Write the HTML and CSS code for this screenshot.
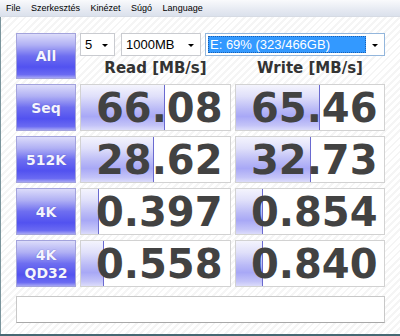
FILE: index.html
```html
<!DOCTYPE html>
<html>
<head>
<meta charset="utf-8">
<link rel="stylesheet" href="styles.css">
</head>
<body>
<div class="window">
  <div class="menubar">
    <span>File</span><span>Szerkesztés</span><span>Kinézet</span><span>Súgó</span><span>Language</span>
  </div>
  <div class="main">
    <div class="grid">
      <div class="btn">All</div>
      <div class="top">
        <div class="selects">
          <div class="select s-count"><span>5</span><i class="arrow"></i></div>
          <div class="select s-size"><span>1000MB</span><i class="arrow"></i></div>
          <div class="select s-drive"><span class="hl">E: 69% (323/466GB)</span><i class="arrow"></i></div>
        </div>
        <div class="heads">
          <div class="head">Read [MB/s]</div>
          <div class="head">Write [MB/s]</div>
        </div>
      </div>

      <div class="btn">Seq</div>
      <div class="cell"><div class="bar" style="width:83px"></div><span class="val">66.08</span></div>
      <div class="cell"><div class="bar" style="width:83px"></div><span class="val">65.46</span></div>

      <div class="btn">512K</div>
      <div class="cell"><div class="bar" style="width:72px"></div><span class="val">28.62</span></div>
      <div class="cell"><div class="bar" style="width:74px"></div><span class="val">32.73</span></div>

      <div class="btn">4K</div>
      <div class="cell"><div class="bar" style="width:17px"></div><span class="val">0.397</span></div>
      <div class="cell"><div class="bar" style="width:26px"></div><span class="val">0.854</span></div>

      <div class="btn two">4K<br>QD32</div>
      <div class="cell"><div class="bar" style="width:22px"></div><span class="val">0.558</span></div>
      <div class="cell"><div class="bar" style="width:26px"></div><span class="val">0.840</span></div>
    </div>
    <div class="status"></div>
  </div>
</div>
</body>
</html>
```
FILE: styles.css
```css
html, body {
  margin: 0;
  padding: 0;
}
body {
  width: 400px;
  height: 336px;
  overflow: hidden;
  background: #ffffff;
}
.window {
  width: 400px;
  height: 336px;
  box-sizing: border-box;
  display: flex;
  flex-direction: column;
  border-bottom: 2px solid #466873;
  background: repeating-linear-gradient(-45deg, #ffffff 0 3px, #f5f5f5 3px 5px);
}
.menubar {
  height: 16px;
  flex: none;
  display: flex;
  align-items: center;
  gap: 10.5px;
  padding-left: 6px;
  font-family: "Liberation Sans", Arial, sans-serif;
  font-size: 9px;
  color: #000;
  background: linear-gradient(#f9fafc, #e6eaf2 60%, #dbe1ec);
  border-bottom: 1px solid #d6dbe4;
}
.main {
  flex: 1;
  border-left: 1px solid #7a949c;
  padding: 16px 0 0 15px;
}
.grid {
  display: grid;
  grid-template-columns: 60px 151px 150px;
  grid-template-rows: 46px 47px 47px 47px 47px;
  column-gap: 4px;
  row-gap: 5px;
}
.btn {
  box-sizing: border-box;
  border: 1px solid #a3a3dc;
  background: linear-gradient(#dcdcfa 0%, #b0b0f4 25%, #6e6ef0 50%, #5252f0 75%, #6a6af2 92%, #a6a6f4 100%);
  color: #f4f4ff;
  font-family: "DejaVu Sans", Verdana, sans-serif;
  font-weight: bold;
  font-size: 14px;
  display: flex;
  align-items: center;
  justify-content: center;
  text-align: center;
  text-shadow: 0 0 1px #5050b0;
}
.btn.two {
  line-height: 18px;
}
.top {
  grid-column: 2 / 4;
  display: flex;
  flex-direction: column;
}
.selects {
  height: 23px;
  display: flex;
}
.select {
  box-sizing: border-box;
  height: 23px;
  border: 1px solid #c9cbd0;
  background: #ffffff;
  display: flex;
  align-items: center;
  font-family: "Liberation Sans", Arial, sans-serif;
  font-size: 13px;
  color: #000;
  padding-left: 4px;
  position: relative;
}
.s-count { width: 35px; }
.s-size { width: 80px; margin-left: 6px; }
.s-drive {
  width: 180px;
  margin-left: 4px;
  border-color: #93b6dc;
  padding-left: 2px;
  padding-right: 2px;
}
.hl {
  flex: none;
  width: 158px;
  height: 17px;
  box-sizing: border-box;
  background: #3399ff;
  color: #fff;
  padding-left: 2px;
  line-height: 17px;
  outline: 1px dotted #1a5fb0;
  outline-offset: -1px;
}
.arrow {
  position: absolute;
  right: 6px;
  top: 10px;
  width: 0;
  height: 0;
  border-left: 3px solid transparent;
  border-right: 3px solid transparent;
  border-top: 3px solid #000;
}
.heads {
  flex: 1;
  display: grid;
  grid-template-columns: 151px 150px;
  column-gap: 4px;
  align-items: end;
}
.head {
  text-align: center;
  font-family: "DejaVu Sans", Verdana, sans-serif;
  font-weight: bold;
  font-size: 15px;
  color: #333;
  line-height: 18px;
  padding-bottom: 2px;
}
.cell {
  position: relative;
  box-sizing: border-box;
  border: 1px solid #d2d2d2;
  background: #ffffff;
  overflow: hidden;
  display: flex;
  align-items: center;
  padding-left: 15px;
}
.bar {
  position: absolute;
  left: 0;
  top: 0;
  bottom: 0;
  background: linear-gradient(#f4f4fd 0%, #e0e0fa 25%, #b8b8f6 55%, #a8a8f6 70%, #c4c4f8 90%, #dcdcfa 100%);
  border-right: 1px solid #6a6ad0;
}
.val {
  position: relative;
  font-family: "DejaVu Sans", Verdana, sans-serif;
  font-weight: bold;
  font-size: 40px;
  line-height: 47px;
  color: #424242;
  padding-top: 2px;
}
.status {
  margin-top: 9px;
  width: 369px;
  height: 27px;
  box-sizing: border-box;
  border: 1px solid #c8c8c8;
  border-bottom-color: #a8a8a8;
  background: #ffffff;
}
```
